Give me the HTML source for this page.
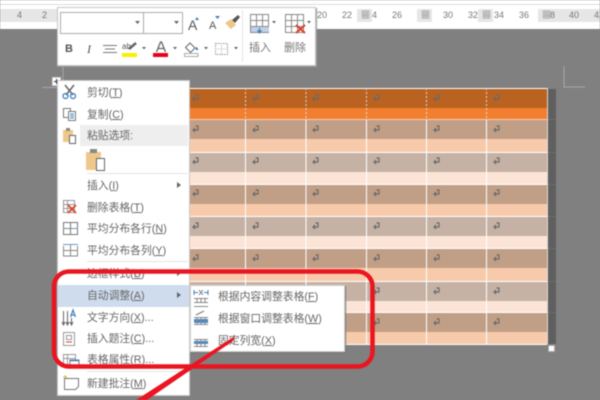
<!DOCTYPE html>
<html><head><meta charset="utf-8">
<style>
html,body{margin:0;padding:0;background:#808080}
#p{position:relative;width:600px;height:400px;overflow:hidden;background:#808080;font-family:"Liberation Sans","Noto Sans CJK SC",sans-serif;filter:blur(.45px)}
.a{position:absolute}
.t{position:absolute;white-space:nowrap;font-size:10.8px;line-height:14px;color:#666}
.r{position:absolute;font-size:9px;line-height:12px;color:#777;top:9px}
svg{position:absolute;left:0;top:0}
u{text-underline-offset:1px}
</style></head><body><div id="p">
<div class="a" style="left:0;top:0;width:600px;height:29px;background:#fff"></div>
<div class="a" style="left:0;top:4px;width:600px;height:1px;background:#ddd"></div>
<div class="a" style="left:0;top:9px;width:600px;height:13px;background:#e6e6e6"></div>
<div class="a" style="left:317px;top:9px;width:40px;height:13px;background:#fff"></div>
<div class="a" style="left:372px;top:9px;width:45px;height:13px;background:#fff"></div>
<div class="a" style="left:432px;top:9px;width:46px;height:13px;background:#fff"></div>
<div class="a" style="left:493px;top:9px;width:45px;height:13px;background:#fff"></div>
<div class="r" style="left:17px">4</div><div class="r" style="left:42px">2</div>
<div class="r" style="left:317px">20</div><div class="r" style="left:342px">22</div><div class="r" style="left:372px">4</div><div class="r" style="left:392px">26</div><div class="r" style="left:443px">30</div><div class="r" style="left:468px">32</div><div class="r" style="left:494px">34</div><div class="r" style="left:519px">36</div><div class="r" style="left:550px">8</div><div class="r" style="left:569px">40</div><div class="r" style="left:594px">42</div>
<div class="r" style="left:361px">▦</div><div class="r" style="left:421px">▦</div><div class="r" style="left:482px">▦</div><div class="r" style="left:542px">▦</div>

<!-- table -->
<svg width="600" height="400" style="z-index:1">
<rect x="548" y="89" width="8" height="255" fill="#5f5f5f"/>
<g stroke="#6d6d6d" stroke-width="1"><line x1="548" x2="556" y1="119.5" y2="119.5"/><line x1="548" x2="556" y1="152.5" y2="152.5"/><line x1="548" x2="556" y1="184.5" y2="184.5"/><line x1="548" x2="556" y1="216.5" y2="216.5"/><line x1="548" x2="556" y1="248.5" y2="248.5"/><line x1="548" x2="556" y1="281.5" y2="281.5"/><line x1="548" x2="556" y1="312.5" y2="312.5"/></g>
<rect x="100" y="88" width="447" height="257" fill="#fff"/>
<rect x="100" y="89" width="447" height="19" fill="#ba621f"/><rect x="100" y="108" width="447" height="11" fill="#f27e2f"/>
<rect x="100" y="119" width="447" height="1" fill="#f8cdb0"/>
<rect x="100" y="120" width="447" height="19" fill="#c19f87"/><rect x="100" y="139" width="447" height="13" fill="#f8caac"/>
<rect x="100" y="153" width="447" height="19" fill="#c5b2a5"/><rect x="100" y="172" width="447" height="12" fill="#fbe4d5"/>
<rect x="100" y="185" width="447" height="19" fill="#c19f87"/><rect x="100" y="204" width="447" height="12" fill="#f8caac"/>
<rect x="100" y="217" width="447" height="19" fill="#c5b2a5"/><rect x="100" y="236" width="447" height="12" fill="#fbe4d5"/>
<rect x="100" y="249" width="447" height="19" fill="#c19f87"/><rect x="100" y="268" width="447" height="13" fill="#f8caac"/>
<rect x="100" y="282" width="447" height="19" fill="#c5b2a5"/><rect x="100" y="301" width="447" height="11" fill="#fbe4d5"/>
<rect x="100" y="313" width="447" height="19" fill="#c19f87"/><rect x="100" y="332" width="447" height="12" fill="#f8caac"/>
<rect x="547" y="88" width="1" height="256" fill="#e0d8d2"/>
<g stroke="#fff" stroke-width="1">
<line x1="245.5" x2="245.5" y1="120" y2="345"/><line x1="306" x2="306" y1="120" y2="345"/><line x1="366.5" x2="366.5" y1="120" y2="345"/><line x1="426.5" x2="426.5" y1="120" y2="345"/><line x1="486.5" x2="486.5" y1="120" y2="345"/>
</g>
<g stroke="#ddd" stroke-width="1" stroke-dasharray="2 2">
<line x1="245.5" x2="245.5" y1="88" y2="120"/><line x1="306" x2="306" y1="88" y2="120"/><line x1="366.5" x2="366.5" y1="88" y2="120"/><line x1="426.5" x2="426.5" y1="88" y2="120"/><line x1="486.5" x2="486.5" y1="88" y2="120"/>
</g>
<defs><path id="rt" d="M3.500 0h2.500v4h-5M3 2l-2 2 2 2" fill="none" stroke="#6a6a6a" stroke-width="1.200"/></defs>
<use href="#rt" x="192" y="95"/><use href="#rt" x="252" y="95"/><use href="#rt" x="312" y="95"/><use href="#rt" x="373" y="95"/><use href="#rt" x="433" y="95"/><use href="#rt" x="493" y="95"/>
<use href="#rt" x="192" y="126"/><use href="#rt" x="252" y="126"/><use href="#rt" x="312" y="126"/><use href="#rt" x="373" y="126"/><use href="#rt" x="433" y="126"/><use href="#rt" x="493" y="126"/>
<use href="#rt" x="192" y="158"/><use href="#rt" x="252" y="158"/><use href="#rt" x="312" y="158"/><use href="#rt" x="373" y="158"/><use href="#rt" x="433" y="158"/><use href="#rt" x="493" y="158"/>
<use href="#rt" x="192" y="190"/><use href="#rt" x="252" y="190"/><use href="#rt" x="312" y="190"/><use href="#rt" x="373" y="190"/><use href="#rt" x="433" y="190"/><use href="#rt" x="493" y="190"/>
<use href="#rt" x="192" y="223"/><use href="#rt" x="252" y="223"/><use href="#rt" x="312" y="223"/><use href="#rt" x="373" y="223"/><use href="#rt" x="433" y="223"/><use href="#rt" x="493" y="223"/>
<use href="#rt" x="192" y="255"/><use href="#rt" x="252" y="255"/><use href="#rt" x="312" y="255"/><use href="#rt" x="433" y="255"/><use href="#rt" x="373" y="255"/><use href="#rt" x="493" y="255"/>
<use href="#rt" x="373" y="288"/><use href="#rt" x="433" y="288"/><use href="#rt" x="493" y="288"/>
<use href="#rt" x="373" y="319"/><use href="#rt" x="433" y="319"/><use href="#rt" x="493" y="319"/>
<rect x="548.500" y="345.500" width="6" height="6" fill="#fff" stroke="#aaa"/>
<path d="M564 66v21h21" fill="none" stroke="#a8a8a8" stroke-width="1"/>
<path d="M42 87.500h15M63 66v15" fill="none" stroke="#a8a8a8" stroke-width="1"/>
<rect x="52" y="77" width="9" height="9" fill="#fff" stroke="#999"/>
<path d="M54 81.500h5M56.500 79v5" stroke="#333" stroke-width="1"/>
</svg>

<!-- mini toolbar -->
<div class="a" style="left:57px;top:7px;width:259px;height:59px;background:#fff;border:1px solid #c6c6c6;box-sizing:border-box;z-index:2;box-shadow:1px 1px 1px #999"></div>
<svg width="600" height="400" style="z-index:3">
<rect x="60.500" y="12.500" width="83" height="21" fill="#fff" stroke="#ababab"/><rect x="143.500" y="12.500" width="39" height="21" fill="#fff" stroke="#ababab"/>
<g fill="#666"><path d="M135 21h5l-2.500 3zM174 21h5l-2.500 3zM142 47h4l-2 2.500zM173 47h4l-2 2.500zM204 47h4l-2 2.500zM234 47h4l-2 2.500zM272 21h4l-2 2.500zM307 21h4l-2 2.500z"/></g>
<line x1="242.500" y1="10" x2="242.500" y2="62" stroke="#e4e4e4"/>
<!-- align -->
<path d="M103 45.500h14M105 49h10M103 52.500h14" stroke="#777"/>
<!-- highlight -->
<path d="M129 49l7-6" stroke="#666" stroke-width="2.500"/>
<rect x="122" y="53" width="15" height="4" fill="#f7f000"/>
<!-- font colour A -->
<path d="M156.500 52l4-10h1l4 10M158 48.500h6" fill="none" stroke="#666" stroke-width="1.300"/>
<rect x="153" y="53" width="15" height="4" fill="#e8001c"/>
<!-- bucket -->
<path d="M190 43l5 5-4.500 4.500-5-5z" fill="#fff" stroke="#666"/><path d="M196 47.500l1.500 2.500" stroke="#3f7fc0" stroke-width="2"/><rect x="184.500" y="53.500" width="13.500" height="3" fill="#fff" stroke="#aaa"/>
<!-- borders -->
<rect x="215.500" y="43.500" width="12" height="11" fill="none" stroke="#999" stroke-dasharray="1.500 1"/><path d="M221.500 43v12M215 49h13" stroke="#bbb" stroke-dasharray="1 1"/>
<!-- brush -->
<path d="M225 23l6-4 5 6-5 4z" fill="#eec78a"/><path d="M232 20l6-5 2 2-5 6z" fill="#555"/>
<!-- A+ A- -->
<path d="M195 20h4l-2-3z M215 16h5l-2.500 3z" fill="#3f7fc0"/>
<!-- insert -->
<g fill="none" stroke="#8a8a8a"><rect x="250.500" y="14.500" width="18" height="18"/><path d="M256.500 14v18M262.500 14v18M250 20.500h19M250 26.500h19"/></g>
<rect x="251" y="27" width="18" height="5" fill="#bfd2e8"/>
<path d="M259.500 28v4M257.500 30l2 3 2-3" stroke="#2f74b8" fill="none"/>
<!-- delete -->
<g fill="none" stroke="#8a8a8a"><rect x="285.500" y="14.500" width="18" height="18"/><path d="M291.500 14v18M297.500 14v18M285 20.500h19M285 26.500h19"/></g>
<path d="M296 25l9 8M305 25l-9 8" stroke="#d9402a" stroke-width="2"/>
</svg>
<div class="t" style="z-index:4;left:188px;top:18px;font-size:14px;color:#555">A</div>
<div class="t" style="z-index:4;left:209px;top:19px;font-size:11px;color:#555">A</div>
<div class="t" style="z-index:4;left:65px;top:42px;font-weight:bold;font-size:11px;color:#555">B</div>
<div class="t" style="z-index:4;left:87px;top:42px;font-style:italic;font-family:'Liberation Serif',serif;font-size:12px;color:#555">I</div>
<div class="t" style="z-index:4;left:122px;top:40px;font-size:8px;color:#555">ab</div>
<div class="t" style="z-index:4;left:249px;top:41px;font-size:11px;color:#777">插入</div>
<div class="t" style="z-index:4;left:284px;top:41px;font-size:11px;color:#777">删除</div>

<!-- main menu -->
<div class="a" style="left:57px;top:80px;width:133px;height:316px;background:#fff;border:1px solid #c8c8c8;box-sizing:border-box;z-index:5"></div>
<div class="a" style="left:80px;top:125px;width:108px;height:21px;background:#eee;z-index:5"></div>
<div class="a" style="left:58px;top:285px;width:131px;height:22px;background:#cfdcee;z-index:5"></div>
<div class="a" style="left:87px;top:173px;width:101px;height:1px;background:#e4e4e4;z-index:5"></div>
<div class="a" style="left:87px;top:261px;width:101px;height:1px;background:#e4e4e4;z-index:5"></div>
<div class="a" style="left:87px;top:371px;width:101px;height:1px;background:#e4e4e4;z-index:5"></div>
<div style="position:absolute;left:0;top:1px;width:600px;z-index:6">
<div class="t" style="left:87px;top:85px">剪切(<u>T</u>)</div>
<div class="t" style="left:87px;top:107px">复制(<u>C</u>)</div>
<div class="t" style="left:87px;top:128px">粘贴选项:</div>
<div class="t" style="left:87px;top:178px">插入(<u>I</u>)</div>
<div class="t" style="left:87px;top:200px">删除表格(<u>T</u>)</div>
<div class="t" style="left:87px;top:221px">平均分布各行(<u>N</u>)</div>
<div class="t" style="left:87px;top:243px">平均分布各列(<u>Y</u>)</div>
<div class="t" style="left:87px;top:266px">边框样式(<u>B</u>)</div>
<div class="t" style="left:87px;top:288px">自动调整(<u>A</u>)</div>
<div class="t" style="left:87px;top:310px">文字方向(<u>X</u>)...</div>
<div class="t" style="left:87px;top:331px">插入题注(<u>C</u>)...</div>
<div class="t" style="left:87px;top:352px">表格属性(<u>R</u>)...</div>
<div class="t" style="left:87px;top:376px">新建批注(<u>M</u>)</div>
</div>
<svg width="600" height="400" style="z-index:6">
<g fill="#666"><path d="M177 182l4 3-4 3zM177 270l4 3-4 3zM177 292l4 3-4 3z"/></g>
<!-- scissors -->
<path d="M65 85l8 10M74 85l-8 10" stroke="#666" stroke-width="1.500"/><circle cx="65.500" cy="96" r="2.500" fill="none" stroke="#3f7fc0" stroke-width="1.300"/><circle cx="73" cy="96" r="2.500" fill="none" stroke="#3f7fc0" stroke-width="1.300"/>
<!-- copy -->
<rect x="63.500" y="108.500" width="7" height="9" fill="#fff" stroke="#777"/><rect x="68.500" y="111.500" width="7" height="9" fill="#fff" stroke="#777"/><path d="M70 114h4M70 116h4M70 118h4" stroke="#3f7fc0"/>
<!-- paste small -->
<rect x="63" y="130" width="10" height="12" fill="#eec78a"/><rect x="66" y="128" width="4" height="3" fill="#888"/><rect x="69.500" y="135.500" width="6" height="8" fill="#fff" stroke="#666"/>
<!-- paste large -->
<rect x="86" y="152" width="15" height="18" fill="#eec78a"/><rect x="90" y="149" width="7" height="4" fill="#888"/><rect x="96.500" y="158.500" width="8" height="12" fill="#fff" stroke="#666"/>
<!-- delete table -->
<g fill="none" stroke="#999"><rect x="63.500" y="200.500" width="11" height="12"/><path d="M67.500 200v12M63 204.500h11M63 208.500h8"/></g><path d="M68 205l8 8M76 205l-8 8" stroke="#d9402a" stroke-width="1.700"/>
<!-- rows -->
<g fill="none" stroke="#777"><rect x="63.500" y="222.500" width="14" height="12"/><path d="M70.500 222v13"/></g><path d="M63 228.500h7" stroke="#888"/><path d="M71 228.500h7" stroke="#6a9bd0"/>
<!-- cols -->
<path d="M63.500 246v10h14v-10M70.500 244v12M63 250.500h15" fill="none" stroke="#888"/><path d="M63 244.500h15" stroke="#6a9bd0"/>
<!-- text dir -->
<path d="M63.500 311v13M67.500 311v13M71.500 318v6M62 322l1.500 3 1.500-3M66 322l1.500 3 1.500-3M70 322l1.500 3 1.500-3" stroke="#666" fill="none"/>
<path d="M70.500 317l2.500-7 2.500 7M71.500 315h3" stroke="#3f7fc0" fill="none" stroke-width="1.200"/>
<!-- caption -->
<rect x="63.500" y="332.500" width="11" height="13" fill="#fff" stroke="#999"/><rect x="66.500" y="335.500" width="5" height="4" fill="none" stroke="#999"/><path d="M66 342h6" stroke="#d9402a"/>
<!-- props -->
<g fill="none" stroke="#999"><rect x="63.500" y="354.500" width="12" height="10"/><path d="M63 358.500h12M67.500 354v10"/></g><rect x="70" y="360" width="9" height="7" fill="#fff" stroke="#777"/><path d="M70 360.500h9" stroke="#3f7fc0" stroke-width="1.500"/>
<!-- comment -->
<path d="M64.500 378.500h14v8l-3 3h-11z" fill="#fff" stroke="#777"/><path d="M65 375l1 3M63 377h4" stroke="#e2b040"/>
</svg>

<!-- submenu -->
<div class="a" style="left:190px;top:285px;width:155px;height:67px;background:#fff;border:1px solid #d0d0d0;box-sizing:border-box;box-shadow:1px 1px 1px #777;z-index:7"></div>
<div style="position:absolute;left:0;top:0;width:600px;z-index:8">
<div class="t" style="left:218px;top:290px">根据内容调整表格(<u>F</u>)</div>
<div class="t" style="left:218px;top:312px">根据窗口调整表格(<u>W</u>)</div>
<div class="t" style="left:218px;top:334px">固定列宽(<u>X</u>)</div>
</div>
<svg width="600" height="400" style="z-index:8">
<g fill="none" stroke="#888"><path d="M194 298.500h14M194 302.500h14M197 298v4M201 298v4M205 298v4M194 306.500h14"/></g>
<path d="M194 292.500h4M204 292.500h4M194 290v5M208 290v5" stroke="#3f7fc0" fill="none"/><path d="M199 290l4 5M203 290l-4 5" stroke="#777"/>
<rect x="194" y="319" width="14" height="4" fill="#4a88c8"/><path d="M194 317.500h14M194 324.500h14M197 317v8M201 317v8M205 317v8" stroke="#888" fill="none"/><path d="M196 315l8-4" stroke="#777"/>
<rect x="194" y="341" width="14" height="3" fill="#4a88c8"/><path d="M194 339.500h14M194 346.500h14M197 339v8M201 339v8M205 339v8" stroke="#888" fill="none"/>
</svg>

<!-- annotation -->
<svg width="600" height="400" style="z-index:9">
<rect x="54" y="271.500" width="318.500" height="95" rx="15" ry="15" fill="none" stroke="#ea1520" stroke-width="4.500"/>
<path d="M235 336l-2 5-89 61h-11z" fill="#ea1520"/>
</svg>
</div></body></html>
